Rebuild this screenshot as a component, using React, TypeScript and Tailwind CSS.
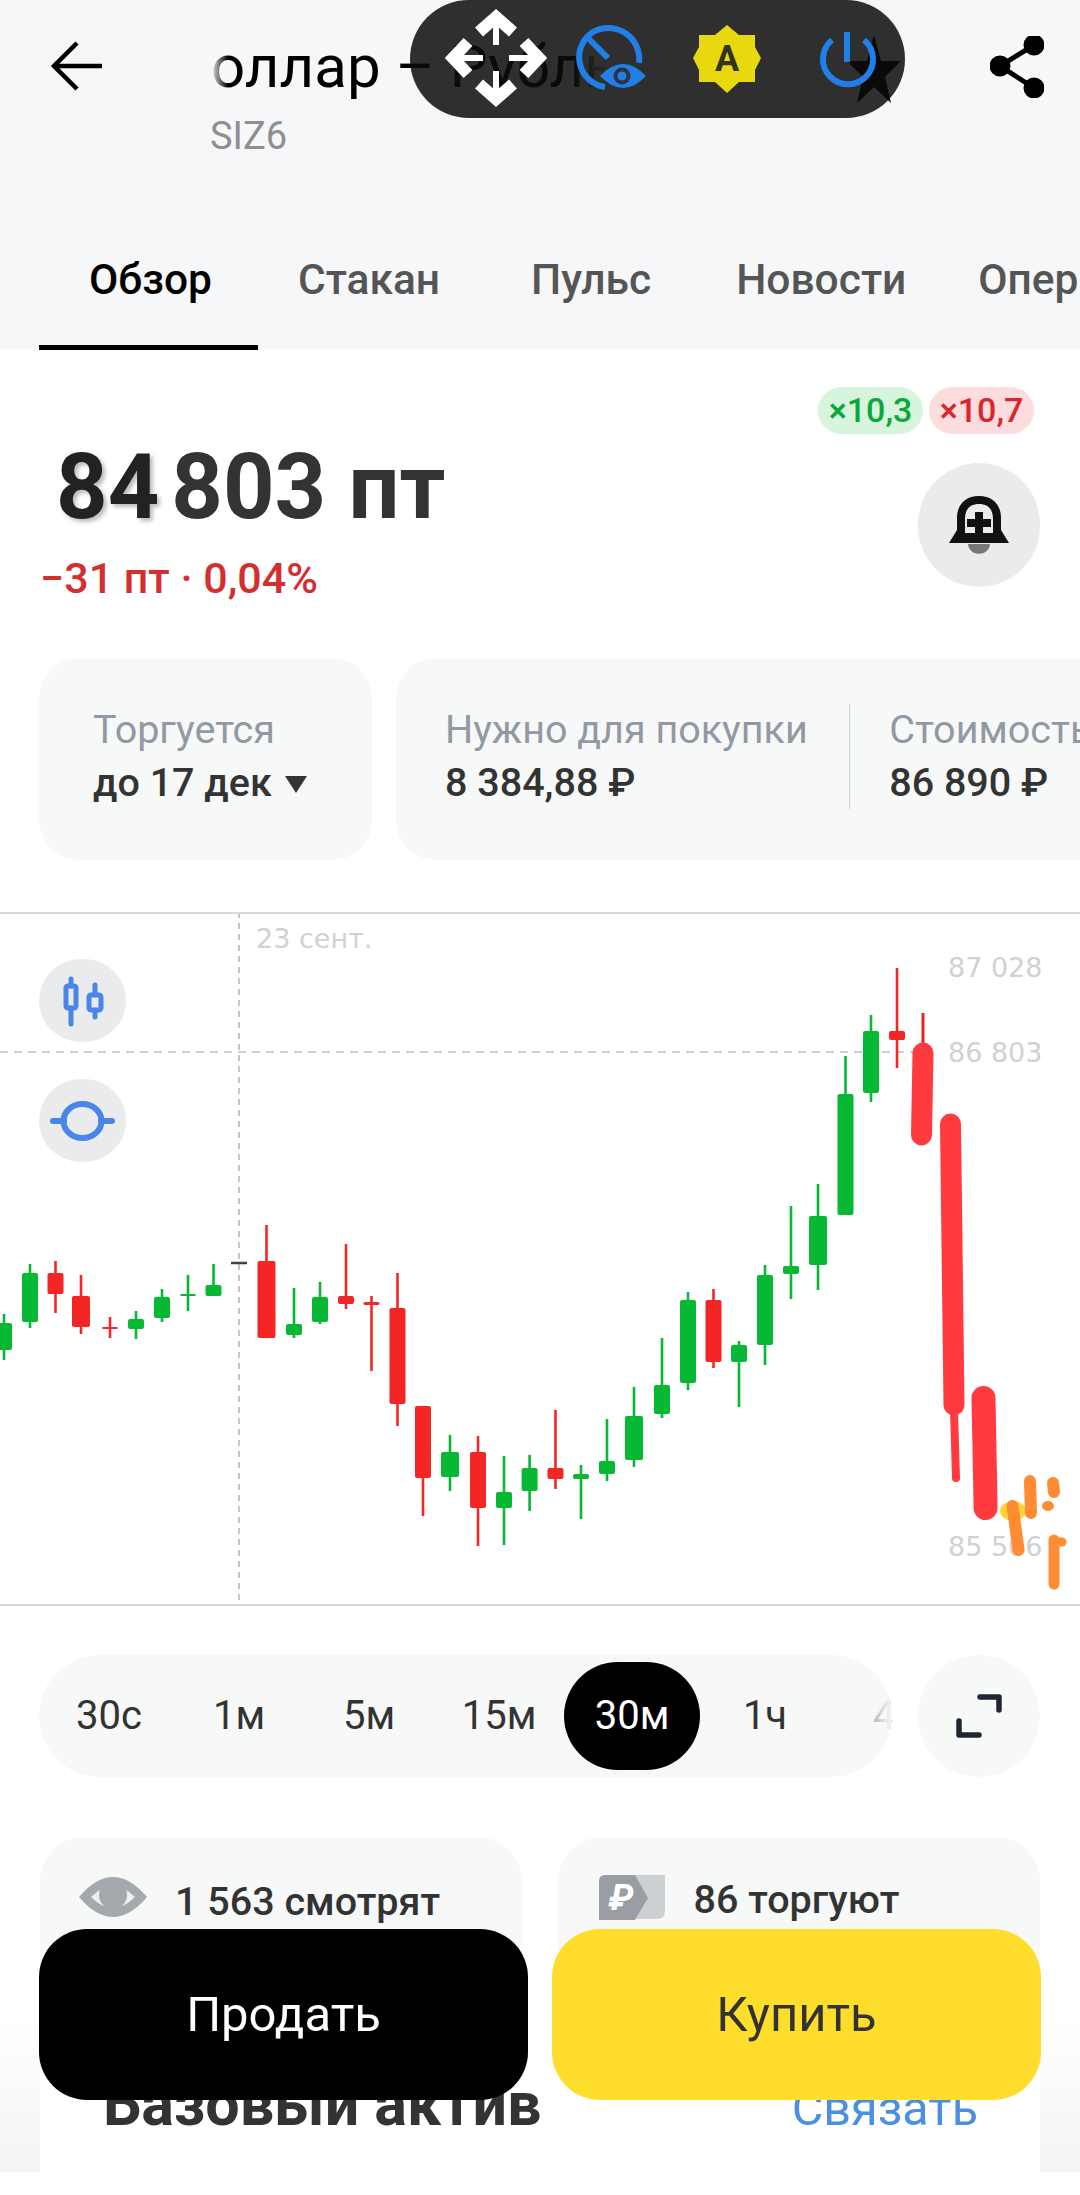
import { ReactNode } from "react";

// x, wick top, wick bottom, body top, body bottom, body width
type Candle = [number, number, number, number, number, number?];

const GREEN = "#06b834";
const RED = "#f42525";

const greenCandles: Candle[] = [
  [4, 1314, 1360, 1323, 1350],
  [30, 1264, 1328, 1273, 1322],
  [136, 1311, 1339, 1319, 1329],
  [162, 1289, 1322, 1297, 1318],
  [188, 1275, 1311, 1294, 1296],
  [213.5, 1264, 1296, 1285, 1296],
  [294, 1288, 1338, 1324, 1335],
  [320, 1282, 1324, 1297, 1322],
  [450, 1435, 1491, 1452, 1477, 18],
  [504, 1456, 1545, 1492, 1508],
  [529.6, 1455, 1511, 1468, 1491],
  [581, 1465, 1519, 1474, 1479],
  [607, 1419, 1481, 1461, 1474],
  [634, 1387, 1467, 1416, 1460, 18],
  [662, 1338, 1418, 1385, 1414],
  [688, 1292, 1390, 1300, 1383],
  [739, 1341, 1407, 1345, 1362],
  [765, 1265, 1365, 1275, 1345],
  [791, 1206, 1299, 1266, 1274],
  [818, 1184, 1290, 1216, 1265, 18],
  [845.5, 1056, 1215, 1094, 1215],
  [871, 1015, 1102, 1031, 1093],
];

const redCandles: Candle[] = [
  [55.5, 1261, 1313, 1273, 1294],
  [81, 1275, 1334, 1296, 1327, 18],
  [110, 1317, 1338, 1327, 1329],
  [266.5, 1225, 1338, 1261, 1338, 18],
  [346, 1244, 1309, 1296, 1304],
  [371.5, 1296, 1371, 1302, 1305],
  [397.5, 1273, 1426, 1308, 1404],
  [423, 1406, 1516, 1406, 1478],
  [478, 1436, 1546, 1452, 1508],
  [555.5, 1410, 1489, 1468, 1479],
  [713.5, 1289, 1368, 1300, 1362],
  [897, 968, 1068, 1031, 1040],
];

const tabs = [
  { label: "Обзор", cls: "w-[219px] pl-[50px] text-black" },
  { label: "Стакан", cls: "ml-[40px] text-[#555]" },
  { label: "Пульс", cls: "ml-[91px] text-[#555]" },
  { label: "Новости", cls: "ml-[85px] text-[#555]" },
  { label: "Опер", cls: "ml-[72px] text-[#555]" },
];

const frames = ["30с", "1м", "5м", "15м", "30м", "1ч", "4ч"];

function CandleGroup({ data, color }: { data: Candle[]; color: string }) {
  return (
    <g fill={color} stroke={color}>
      {data.map(([x, wt, wb, bt, bb, w = 16]) => (
        <g key={x + "-" + wt}>
          <line x1={x} x2={x} y1={wt} y2={wb} strokeWidth={2.6} />
          <rect x={x - w / 2} y={bt} width={w} height={bb - bt} rx={2} strokeWidth={0} />
        </g>
      ))}
    </g>
  );
}

function Chart() {
  return (
    <svg className="absolute -top-[2px] left-0" width={1080} height={694} viewBox="0 912 1080 694">
      <line x1={239} x2={239} y1={912} y2={1606} stroke="#c4c4c4" strokeWidth={2} strokeDasharray="6 5" />
      <line x1={0} x2={936} y1={1052} y2={1052} stroke="#cfcfcf" strokeWidth={2} strokeDasharray="8 6" />
      <CandleGroup data={greenCandles} color={GREEN} />
      <CandleGroup data={redCandles} color={RED} />
      <line x1={231} x2={247} y1={1263} y2={1263} stroke="#444" strokeWidth={2.5} />
      <line x1={923} x2={923} y1={1013} y2={1050} stroke="#e0262b" strokeWidth={3} />

      {/* last candles are smeared by a finger trace in the screenshot */}
      <g stroke="#ff3b40" strokeLinecap="round" fill="none">
        <line x1={923} y1={1053} x2={921.5} y2={1135} strokeWidth={21} />
        <line x1={950.5} y1={1124} x2={954} y2={1405} strokeWidth={21} />
        <line x1={954} y1={1410} x2={956} y2={1478} strokeWidth={8} />
        <line x1={983.5} y1={1398} x2={985.6} y2={1508} strokeWidth={24} />
      </g>
      <ellipse cx={1013} cy={1511} rx={13} ry={10} fill="#ffd43b" />
      <g stroke="#ff8c33" strokeLinecap="round" fill="none">
        <line x1={1012.5} y1={1506} x2={1018.6} y2={1550} strokeWidth={12} />
        <line x1={1030} y1={1481} x2={1031} y2={1513} strokeWidth={12} />
        <line x1={1053} y1={1483} x2={1054} y2={1492} strokeWidth={12} />
        <line x1={1054} y1={1540} x2={1054} y2={1584} strokeWidth={11} />
        <line x1={1054} y1={1542} x2={1062} y2={1542} strokeWidth={9} />
      </g>
      <ellipse cx={1048} cy={1506} rx={6} ry={5} fill="#ff8c33" />
    </svg>
  );
}

function ChartButton({ children, cls }: { children: ReactNode; cls: string }) {
  return (
    <div className={`absolute left-[39px] flex h-[83px] w-[87px] items-center justify-center rounded-full bg-[#e9ebed] ${cls}`}>
      {children}
    </div>
  );
}

function ChartLabel({ text, cls }: { text: string; cls: string }) {
  return (
    <span className={`absolute text-[27px] leading-[32px] text-[#cfd1d3] [font-family:'DejaVu_Sans',sans-serif] ${cls}`}>
      {text}
    </span>
  );
}

function Overlay() {
  return (
    <div className="absolute left-[410px] top-0 h-[118px] w-[495px] rounded-full bg-[#0c0c0c]/85">
      <svg width={495} height={118} viewBox="410 0 495 118">
        {/* move */}
        <g stroke="#fff" fill="none">
          <path d="M479 32 L496 17 L513 32" strokeWidth={12} />
          <path d="M479 84 L496 99 L513 84" strokeWidth={12} />
          <path d="M468 42 L453 58 L468 74" strokeWidth={12} />
          <path d="M524 42 L539 58 L524 74" strokeWidth={12} />
          <path d="M496 20 V45 M496 71 V96 M456 58 H483 M509 58 H536" strokeWidth={6} />
        </g>
        {/* gauge with eye */}
        <g fill="none" stroke="#2080e8" strokeWidth={6}>
          <path d="M605 87 A30 30 0 0 1 593 32 A31 31 0 0 1 639 63" />
          <line x1={588} y1={38} x2={608} y2={58} />
        </g>
        <path d="M600 76 Q623 52 646 76 Q623 100 600 76 Z" fill="#2080e8" />
        <circle cx={622} cy={76} r={6.5} fill="none" stroke="#2b3440" strokeWidth={4} />
        {/* auto brightness */}
        <polygon
          points="727,25 739,35 755,35 755,47 761,58 755,70 755,82 739,82 727,93 715,82 699,82 699,70 693,58 699,47 699,35 715,35"
          fill="#e8d80f"
        />
        <text x={727} y={71} textAnchor="middle" fontSize={36} fontWeight={700} fill="#33331e" fontFamily="Roboto, sans-serif">
          A
        </text>
        {/* power */}
        <path d="M832 40 A25 25 0 1 0 864 40" fill="none" stroke="#2080e8" strokeWidth={6} />
        <line x1={847} y1={32} x2={847} y2={62} stroke="#2080e8" strokeWidth={6} />
      </svg>
    </div>
  );
}

function Header() {
  return (
    <header className="relative h-[350px] shrink-0 bg-[#f6f7f8]">
      <div className="flex h-[255px] items-start">
        <svg className="ml-[50px] mt-[40px] shrink-0" width={54} height={52} viewBox="0 0 54 52" fill="none" stroke="#000" strokeWidth={4.5}>
          <path d="M27 3 L4 26 L27 49 M4 26 H52" />
        </svg>
        <div className="ml-[106px] mt-[35px] w-[400px]">
          <div className="overflow-hidden [mask-image:linear-gradient(90deg,transparent,#000_18px,#000_360px,transparent)]">
            <div className="-ml-[44px] whitespace-nowrap text-[60px] leading-[64px] text-black">Доллар – Рубль</div>
          </div>
          <div className="mt-[17px] text-[38px] leading-[40px] text-[#8e8e93]">SIZ6</div>
        </div>
        <svg className="ml-auto mr-[36px] mt-[36px] shrink-0" width={54} height={62} viewBox="0 0 54 62" fill="#000" stroke="#000" strokeWidth={5}>
          <circle cx={44} cy={9} r={8} />
          <circle cx={10} cy={30} r={8} />
          <circle cx={44} cy={52} r={8} />
          <path d="M44 9 L10 30 L44 52" fill="none" />
        </svg>
      </div>
      <svg className="absolute left-[847px] top-[35px]" width={54} height={68} viewBox="0 0 54 68">
        <polygon points="27,0 34,26 54,26 38,42 44,68 27,52 10,68 16,42 0,26 20,26" fill="#000" />
      </svg>
      <nav className="flex h-[95px] items-start overflow-hidden pl-[39px] text-[42.5px] font-medium leading-[50px]">
        {tabs.map((tab) => (
          <div key={tab.label} className={`shrink-0 whitespace-nowrap ${tab.cls}`}>
            {tab.label}
          </div>
        ))}
      </nav>
      <div className="absolute bottom-0 left-[39px] h-[5px] w-[219px] bg-black" />
    </header>
  );
}

function InfoCell({ label, value }: { label: string; value: ReactNode }) {
  return (
    <div className="flex shrink-0 flex-col">
      <span className="whitespace-nowrap text-[39.5px] leading-[48px] text-[#9299a2]">{label}</span>
      <span className="mt-[5px] flex items-center whitespace-nowrap text-[39.5px] font-medium leading-[48px] text-[#333]">{value}</span>
    </div>
  );
}

function PriceBlock() {
  return (
    <section className="relative h-[562px] shrink-0">
      <div className="flex justify-end gap-[6px] pr-[46px] pt-[37px]">
        <span className="flex h-[47px] w-[105px] items-center justify-center rounded-full bg-[#d7f5dd] text-[34px] font-medium text-[#0aa83a]">×10,3</span>
        <span className="flex h-[47px] w-[105px] items-center justify-center rounded-full bg-[#fcdcdc] text-[34px] font-medium text-[#d8262c]">×10,7</span>
      </div>
      <div className="mt-[29px] flex h-[124px] items-start justify-between pl-[56px] pr-[40px]">
        <div className="-mt-[25px]">
          <div className="whitespace-nowrap text-[90px] font-bold leading-[100px] text-[#333]">
            <span className="text-[#222] [text-shadow:3px_3px_4px_#bbb]">84</span>
            <span className="ml-[12px]">803 пт</span>
          </div>
          <div className="-ml-[16px] mt-[17px] whitespace-nowrap text-[43px] font-medium leading-[46px] text-[#d32f2f]">−31 пт · 0,04%</div>
        </div>
        <div className="flex h-[124px] w-[122px] items-center justify-center rounded-full bg-[#e9ebed]">
          <svg width={62} height={62} viewBox="0 0 62 62">
            <path d="M31 2 C16 2 9 12 9 24 V36 L1 49 H61 L53 36 V24 C53 12 46 2 31 2 Z M31 10 C41 10 45 16 45 25 V39 H17 V25 C17 16 21 10 31 10 Z" fill="#111" fillRule="evenodd" />
            <path d="M27 18 H35 V25 H43 V33 H35 V40 H27 V33 H19 V25 H27 Z" fill="#111" />
            <path d="M20 50 H42 C41 63 21 63 20 50 Z" fill="#777" />
          </svg>
        </div>
      </div>
      <div className="mt-[71px] flex gap-[24px] pl-[39px]">
        <div className="flex h-[202px] w-[333px] shrink-0 items-center rounded-[40px] bg-[#f7f8f8] pb-[6px] pl-[54px]">
          <InfoCell
            label="Торгуется"
            value={
              <>
                до 17 дек
                <svg className="ml-[13px] mt-[3px]" width={22} height={20} viewBox="0 0 22 20">
                  <path d="M0 2 H22 L11 19 Z" fill="#333" />
                </svg>
              </>
            }
          />
        </div>
        <div className="flex h-[202px] grow items-center overflow-hidden rounded-l-[40px] bg-[#f7f8f8] pb-[6px] pl-[49px]">
          <InfoCell label="Нужно для покупки" value="8 384,88 ₽" />
          <div className="ml-[41px] mr-[39px] h-[105px] w-[1.5px] shrink-0 bg-[#d0d3d6]" />
          <InfoCell label="Стоимость" value="86 890 ₽" />
        </div>
      </div>
    </section>
  );
}

function ChartBlock() {
  return (
    <section className="relative h-[694px] shrink-0 overflow-hidden border-y-2 border-[#d8d8d8]">
      <ChartLabel text="23 сент." cls="left-[256px] top-[9px]" />
      <ChartLabel text="87 028" cls="left-[948px] top-[38px]" />
      <ChartLabel text="86 803" cls="left-[948px] top-[123px]" />
      <ChartLabel text="85 506" cls="left-[948px] top-[617px]" />
      <Chart />
      <ChartButton cls="top-[45px]">
        <svg width={87} height={83} viewBox="39 959 87 83">
          <g fill="none" stroke="#4a86e8" strokeWidth={5} strokeLinecap="round">
            <line x1={71} x2={71} y1={979} y2={986} />
            <line x1={71} x2={71} y1={1008} y2={1024} />
            <rect x={66} y={986} width={10} height={22} rx={2} />
            <line x1={95} x2={95} y1={985} y2={994} />
            <line x1={95} x2={95} y1={1011} y2={1017} />
            <rect x={89} y={995} width={12} height={15} rx={2} />
          </g>
        </svg>
      </ChartButton>
      <ChartButton cls="top-[165px]">
        <svg width={87} height={83} viewBox="39 1079 87 83">
          <g fill="none" stroke="#4a86e8" strokeWidth={6} strokeLinecap="round">
            <line x1={53} x2={64} y1={1121} y2={1121} />
            <line x1={101} x2={112} y1={1121} y2={1121} />
            <ellipse cx={82.5} cy={1121} rx={19} ry={17} />
          </g>
        </svg>
      </ChartButton>
    </section>
  );
}

function FramesBlock() {
  return (
    <section className="flex h-[231px] shrink-0 items-start pl-[39px] pt-[49px]">
      <div className="relative h-[122px] w-[853px] shrink-0 overflow-hidden rounded-l-[61px] rounded-r-[61px] bg-[#f7f8f8]">
        <div className="flex h-full items-center pl-[5px] text-[40px] leading-[44px] text-[#333]">
          {frames.map((f) => (
            <div
              key={f}
              className={
                f === "30м"
                  ? "flex h-[108px] w-[136px] shrink-0 items-center justify-center rounded-full bg-black text-white"
                  : "flex w-[130px] shrink-0 items-center justify-center"
              }
            >
              {f}
            </div>
          ))}
        </div>
        <div className="absolute inset-y-0 right-0 w-[60px] bg-gradient-to-r from-transparent to-[#f7f8f8]" />
      </div>
      <div className="ml-[26px] flex h-[122px] w-[122px] shrink-0 items-center justify-center rounded-full bg-[#f7f8f8]">
        <svg width={46} height={44} viewBox="0 0 46 44" fill="none" stroke="#1f2533" strokeWidth={5.5} strokeLinecap="round" strokeLinejoin="round">
          <path d="M24 3 H43 V16 M3 27 V41 H23" />
        </svg>
      </div>
    </section>
  );
}

function StatsBlock() {
  return (
    <section className="flex h-[181px] shrink-0 gap-[36px] px-[40px]">
      <div className="flex h-full w-[482px] items-start rounded-t-[44px] bg-[#f7f8f8] pl-[38px] pt-[40px]">
        <svg className="shrink-0" width={70} height={40} viewBox="0 0 70 40">
          <path d="M1 20 Q35 -20 69 20 Q35 60 1 20 Z" fill="#a5a9ad" />
          <path d="M13 20 Q35 -2 57 20 Q35 42 13 20 Z" fill="#eceef0" />
          <circle cx={35} cy={18} r={14} fill="#a5a9ad" />
        </svg>
        <span className="ml-[27px] whitespace-nowrap text-[39.5px] font-medium leading-[50px] text-[#333]">1 563 смотрят</span>
      </div>
      <div className="flex h-full w-[483px] items-start rounded-t-[44px] bg-[#f7f8f8] pl-[41px] pt-[38px]">
        <svg className="shrink-0" width={66} height={46} viewBox="0 0 66 46">
          <path d="M30 0 H66 V36 Q66 44 58 44 H30 Z" fill="#cdd0d3" />
          <path d="M6 0 H36 L49 23 L36 45 H0 V6 Q0 0 6 0 Z" fill="#999ea5" />
          <text x={22} y={35} textAnchor="middle" fontSize={36} fontWeight={700} fontStyle="italic" fill="#fff" fontFamily="Roboto, sans-serif">
            ₽
          </text>
        </svg>
        <span className="ml-[29px] whitespace-nowrap text-[39.5px] font-medium leading-[50px] text-[#333]">86 торгуют</span>
      </div>
    </section>
  );
}

function BaseAsset() {
  return (
    <section className="h-[154px] shrink-0 bg-gradient-to-b from-white to-[#f3f4f5] px-[40px]">
      <div className="flex h-full w-[1000px] items-baseline justify-between bg-white pl-[63px] pr-[62px] pt-[58px]">
        <span className="text-[61px] font-bold leading-[56px] text-[#333]">Базовый актив</span>
        <span className="text-[48.5px] leading-[56px] text-[#4a8fe0]">Связать</span>
      </div>
    </section>
  );
}

export default function App() {
  return (
    <div className="relative flex h-[2195px] w-[1080px] flex-col overflow-hidden bg-white [font-family:Roboto,sans-serif]">
      <Header />
      <PriceBlock />
      <ChartBlock />
      <FramesBlock />
      <StatsBlock />
      <BaseAsset />
      <Overlay />
      <div className="absolute left-[39px] top-[1929px] flex gap-[24px]">
        <button className="flex h-[171px] w-[489px] items-center justify-center rounded-[48px] bg-black text-[49px] text-white">Продать</button>
        <button className="flex h-[171px] w-[489px] items-center justify-center rounded-[48px] bg-[#ffdd2d] text-[49px] text-[#333]">Купить</button>
      </div>
    </div>
  );
}
